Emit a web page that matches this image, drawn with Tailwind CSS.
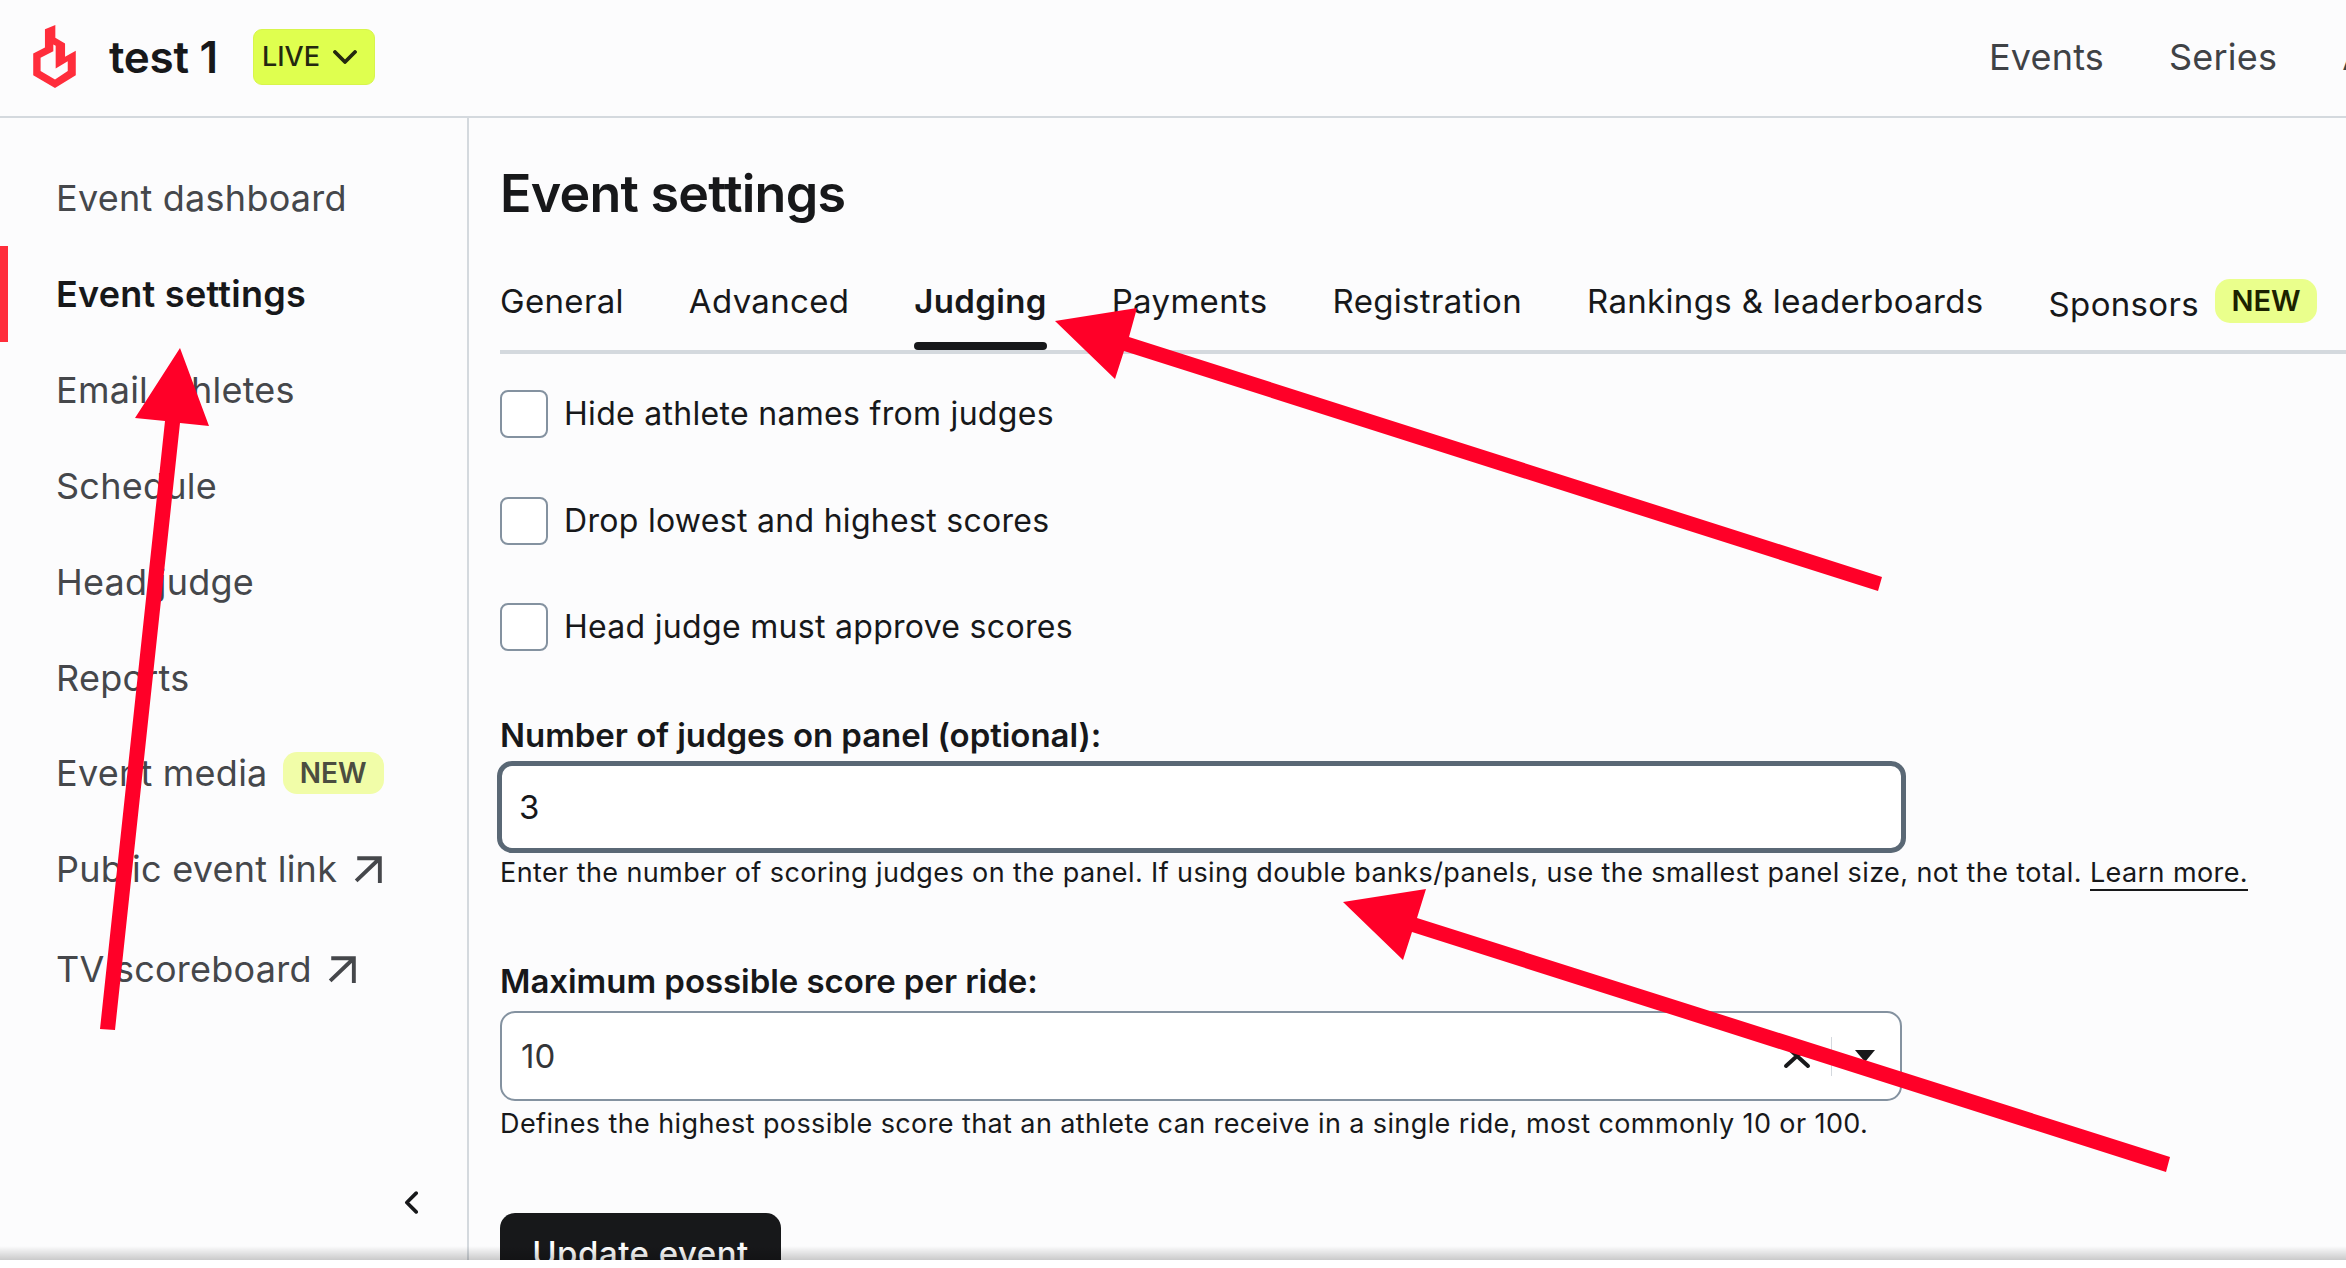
<!DOCTYPE html>
<html>
<head>
    <title>Event settings</title>
    <script src="https://cdn.jsdelivr.net/npm/@tailwindcss/browser@4"></script>
</head>
<body class="bg-white overflow-hidden font-['Inter',sans-serif] text-[#17181a]">
<div class="relative h-[1260px] w-[2346px] overflow-hidden bg-[#fcfcfd] flex flex-col">

    <!-- top bar -->
    <header class="h-[118px] shrink-0 border-b-2 border-[#d4d9de] flex items-center pl-[33px] pb-[2px]">
        <svg viewBox="40 30 127 188" class="w-[43px] h-[63px] shrink-0 -mt-[2px]">
            <path fill="#ff2d3b" fill-rule="evenodd" d="M75 43L106 30V68L135 85V125L167 107V180L105 218L40 180V115L75 97ZM100 88L107 92V160L143 138V167L105 193L62 167V128L100 108Z"/>
        </svg>
        <span class="ml-[33px] w-[111px] whitespace-nowrap text-[44px] leading-none font-semibold tracking-[-0.3px]">test 1</span>
        <button class="ml-[33px] w-[122px] h-[56px] rounded-[9px] bg-[#dfff4f] border border-[#d8f54c] flex items-center pl-[8px] gap-[13px] text-[27px] font-medium text-[#24280f]">
            LIVE
            <svg viewBox="0 0 24 14" class="w-[24px] h-[14px]" fill="none" stroke="#24280f" stroke-width="3.8" stroke-linecap="round" stroke-linejoin="round"><path d="M2 2l10 10L22 2"/></svg>
        </button>
        <nav class="ml-auto w-[357px] shrink-0 flex gap-[65px] text-[36px] tracking-[0.2px] text-[#3f4246] overflow-hidden whitespace-nowrap">
            <a>Events</a>
            <a>Series</a>
            <a>Athletes</a>
        </nav>
    </header>

    <div class="flex flex-1 min-h-0">
        <!-- side menu -->
        <aside class="relative w-[469px] shrink-0 border-r-2 border-[#d4d9de] pt-[32px] text-[36px] tracking-[0.25px] text-[#45474b]">
            <a class="h-[96px] flex items-center pl-[56px]">Event dashboard</a>
            <a class="h-[96px] flex items-center pl-[48px] border-l-8 border-[#ff2d3b] font-semibold text-[#17181a]">Event settings</a>
            <a class="h-[96px] flex items-center pl-[56px]">Email athletes</a>
            <a class="h-[96px] flex items-center pl-[56px]">Schedule</a>
            <a class="h-[96px] flex items-center pl-[56px]">Head judge</a>
            <a class="h-[96px] flex items-center pl-[56px]">Reports</a>
            <a class="h-[94px] flex items-center pl-[56px]">
                Event media
                <span class="ml-[15px] w-[101px] h-[42px] rounded-[14px] bg-[#f1fda8] flex items-center justify-center text-[28px] font-semibold tracking-normal text-[#4b4d40]">NEW</span>
            </a>
            <a class="h-[97px] flex items-center pl-[56px]">
                Public event link
                <svg viewBox="0 0 26 26" class="ml-[17px] w-[28px] h-[28px]" fill="none" stroke="#45474b" stroke-width="3.6"><path d="M2 24L24 3M3 3h21v23"/></svg>
            </a>
            <a class="mt-[4px] h-[96px] flex items-center pl-[56px]">
                TV scoreboard
                <svg viewBox="0 0 26 26" class="ml-[16px] w-[28px] h-[28px]" fill="none" stroke="#45474b" stroke-width="3.6"><path d="M2 24L24 3M3 3h21v23"/></svg>
            </a>
            <svg viewBox="0 0 16 24" class="absolute left-[404px] top-[1073px] w-[15px] h-[23px]" fill="none" stroke="#17181a" stroke-width="3.8" stroke-linecap="round" stroke-linejoin="round"><path d="M13 2L3 12l10 10"/></svg>
        </aside>

        <!-- settings form -->
        <main class="flex-1 min-w-0 pl-[31px] pt-[40px]">
            <h1 class="text-[52px] leading-[72px] font-semibold tracking-[-0.77px]">Event settings</h1>

            <div class="h-[124px] border-b-4 border-[#d4d9de] flex text-[33px] leading-[40px] tracking-[0.33px] whitespace-nowrap">
                <a class="pt-[51px] mr-[65px]">General</a>
                <a class="pt-[51px] mr-[65px]">Advanced</a>
                <a class="pt-[51px] mr-[65px] flex flex-col font-semibold">
                    <span>Judging</span>
                    <span class="mt-auto h-2 rounded-full bg-[#17181a]"></span>
                </a>
                <a class="pt-[51px] mr-[65px]">Payments</a>
                <a class="pt-[51px] mr-[65px]">Registration</a>
                <a class="pt-[51px] mr-[65px]">Rankings &amp; leaderboards</a>
                <a class="pt-[51px] flex items-start">
                    <span class="mt-[3px]">Sponsors</span>
                    <span class="ml-[16px] -mt-[2px] w-[102px] h-[44px] rounded-[15px] bg-[#eaff8c] flex items-center justify-center text-[29px] font-semibold tracking-normal text-[#1c2200]">NEW</span>
                </a>
            </div>

            <div class="mt-[36px] flex flex-col gap-[58.67px] text-[32px] tracking-[0.3px]">
                <label class="h-[48px] flex items-center gap-[16px]"><span class="w-[48px] h-[48px] rounded-[8px] border-2 border-[#8492a0] bg-white"></span>Hide athlete names from judges</label>
                <label class="h-[48px] flex items-center gap-[16px]"><span class="w-[48px] h-[48px] rounded-[8px] border-2 border-[#8492a0] bg-white"></span>Drop lowest and highest scores</label>
                <label class="h-[48px] flex items-center gap-[16px]"><span class="w-[48px] h-[48px] rounded-[8px] border-2 border-[#8492a0] bg-white"></span>Head judge must approve scores</label>
            </div>

            <p class="mt-[64px] text-[33px] leading-[40px] font-semibold tracking-[-0.05px]">Number of judges on panel (optional):</p>
            <input value="3" class="mt-[6px] -ml-[3px] block w-[1409px] h-[92px] rounded-[15px] border-[5px] border-[#5a6875] bg-white pl-[17px] text-[33px] text-[#17181a] outline-none">
            <p class="mt-[2px] text-[27px] leading-[36px] tracking-[0.4px] whitespace-nowrap">Enter the number of scoring judges on the panel. If using double banks/panels, use the smallest panel size, not the total. <a class="border-b-2 border-[#17181a]">Learn more.</a></p>

            <p class="mt-[70px] text-[33px] leading-[40px] font-semibold tracking-[-0.05px]">Maximum possible score per ride:</p>
            <div class="mt-[10px] w-[1402px] h-[90px] rounded-[15px] border-2 border-[#8492a0] bg-white flex items-center pl-[19px] text-[33px] text-[#333538]">
                10
                <svg viewBox="0 0 28 26" class="ml-auto w-[28px] h-[26px]" fill="none" stroke="#17181a" stroke-width="4" stroke-linecap="round"><path d="M3 3l22 20M25 3L3 23"/></svg>
                <span class="ml-[20px] w-[1px] h-[39px] bg-[#d4d9de]"></span>
                <span class="ml-[23px] mr-[25px] w-0 h-0 border-x-[10px] border-x-transparent border-t-[12px] border-t-[#17181a]"></span>
            </div>
            <p class="mt-[5px] text-[27px] leading-[36px] tracking-[0.4px] whitespace-nowrap">Defines the highest possible score that an athlete can receive in a single ride, most commonly 10 or 100.</p>

            <button class="mt-[71px] w-[281px] h-[80px] rounded-[15px] bg-[#17181a] text-white text-[33px] tracking-[0.5px] font-medium">Update event</button>
        </main>
    </div>

    <!-- fade at the bottom edge -->
    <div class="absolute inset-x-0 bottom-0 h-[14px] bg-gradient-to-b from-transparent to-black/20"></div>

    <!-- red annotation arrows drawn on top of the page -->
    <svg class="absolute inset-0 w-[2346px] h-[1260px] pointer-events-none" viewBox="0 0 2346 1260" fill="#ff0028">
        <polygon points="180,348 209,426 180,423 115,1030 100,1029 165,421 135,418"/>
        <polygon points="1055,321 1137,308 1129,337 1882,577 1878,591 1124,351 1115,379"/>
        <polygon points="1343,902 1426,889 1417,918 2170,1157 2166,1172 1412,932 1403,960"/>
    </svg>
</div>
</body>
</html>
